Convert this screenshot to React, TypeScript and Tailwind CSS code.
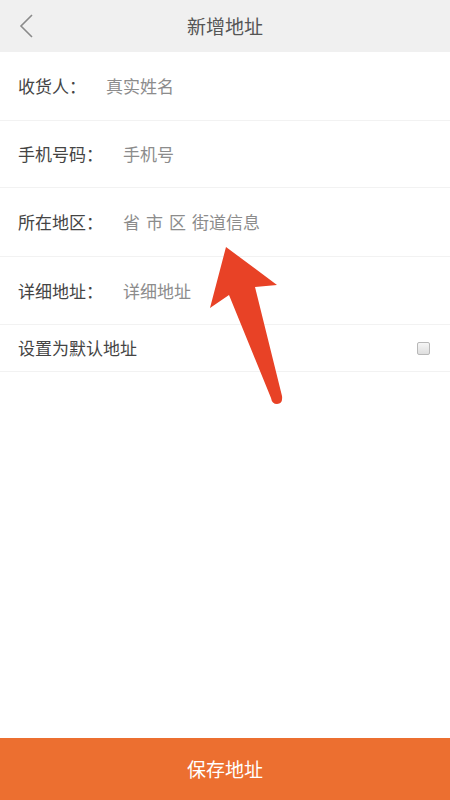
import { useState } from "react";

const rows = [
  { label: "收货人：", value: ["真实姓名"], h: "h-[69px]" },
  { label: "手机号码：", value: ["手机号"], h: "h-[67px]" },
  { label: "所在地区：", value: ["省", "市", "区", "街道信息"], h: "h-[69px]" },
  { label: "详细地址：", value: ["详细地址"], h: "h-[68px]" },
];

export default function App() {
  const [checked, setChecked] = useState(false);

  return (
    <div
      className="relative w-[450px] h-[800px] flex flex-col bg-white overflow-hidden"
      style={{ fontFamily: '"Noto Sans CJK SC", "Noto Sans", sans-serif' }}
    >
      {/* HEADER */}
      <div className="h-[52px] shrink-0 bg-[#f0f0f0] flex items-center relative">
        <svg className="absolute left-[19px] top-[14px]" width="16" height="24" viewBox="0 0 16 24">
          <path d="M13 1 L2 12 L13 23" fill="none" stroke="#8a8a8a" strokeWidth="1.6" />
        </svg>
        <div className="flex-1 text-center text-[19px] text-[#555]">新增地址</div>
      </div>

      {/* FORM */}
      {rows.map((r) => (
        <div key={r.label} className={`${r.h} shrink-0 flex items-center px-[18px] border-b border-[#f2f2f2]`}>
          <span className="text-[17px] text-[#444] shrink-0">{r.label}</span>
          <span className="flex gap-[6px] text-[17px] text-[#8c8c8c] ml-[20px]">
            {r.value.map((v) => (
              <span key={v}>{v}</span>
            ))}
          </span>
        </div>
      ))}

      {/* DEFAULT */}
      <div className="h-[47px] shrink-0 flex items-center justify-between px-[18px] border-b border-[#f2f2f2]">
        <span className="text-[17px] text-[#444]">设置为默认地址</span>
        <button
          onClick={() => setChecked(!checked)}
          className={`w-[13px] h-[13px] rounded-[2px] border border-[#b8b8b8] mr-[2px] ${checked ? "bg-[#ec6f30]" : "bg-gradient-to-b from-[#f6f6f6] to-[#dedede]"}`}
        />
      </div>

      <div className="flex-1" />

      {/* SAVE */}
      <button className="h-[62px] shrink-0 w-full bg-[#ec6f30] text-white text-[19px]">
        保存地址
      </button>

      {/* annotation arrow */}
      <svg className="absolute left-0 top-0 pointer-events-none" width="450" height="800">
        <path
          d="M226 247 L277 285 L255 287 L282 396 Q283 404 277 404 Q272 404 271 398 L229 295 L210 308 Z"
          fill="#e84226"
          strokeLinejoin="round"
        />
      </svg>
    </div>
  );
}
